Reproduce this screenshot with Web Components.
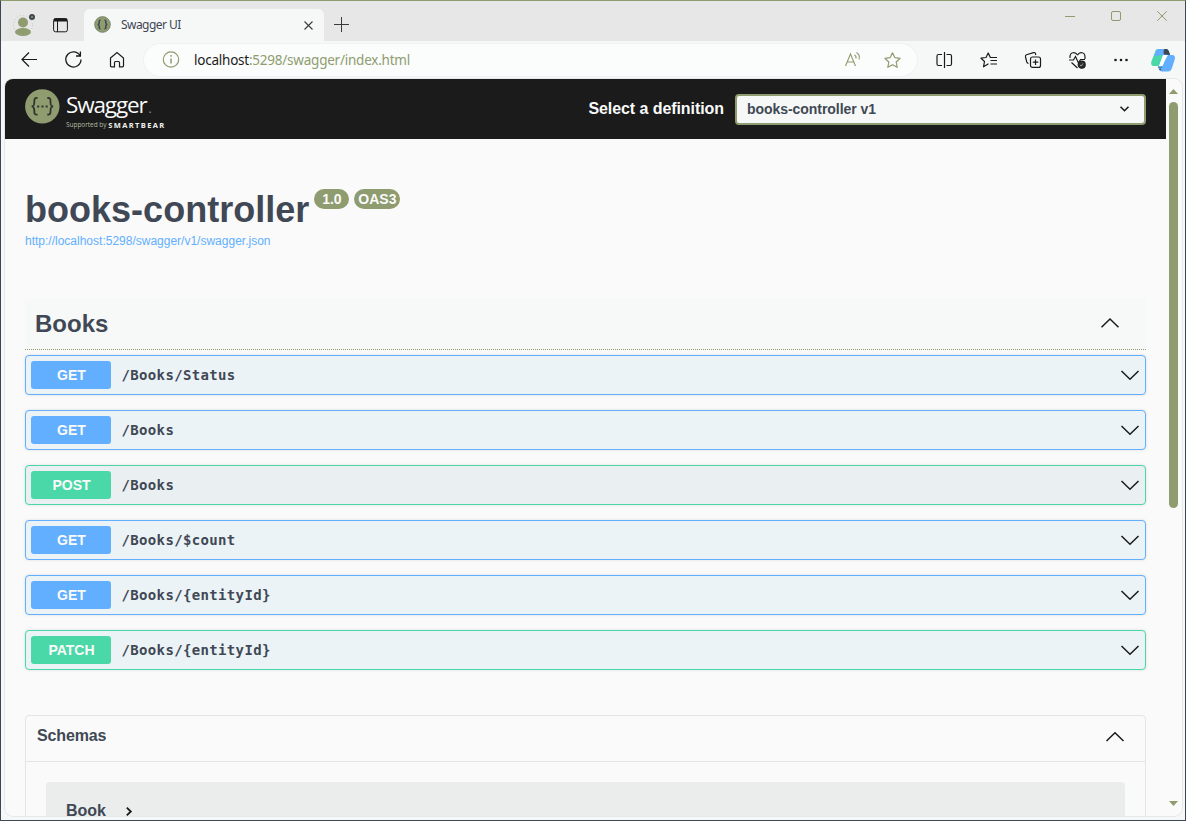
<!DOCTYPE html>
<html lang="en">
<head>
<meta charset="utf-8">
<title>Swagger UI</title>
<style>
html,body{margin:0;height:100%;overflow:hidden;background:#e7e7e7}
body{font-family:"Liberation Sans",Arial,sans-serif;color:#3f4854}
</style>
</head>
<body>
<browser-window>
  <tab-strip slot="tabs">Swagger UI</tab-strip>
  <tool-bar slot="tools"></tool-bar>
  <swagger-topbar><definition-select slot="select">books-controller v1</definition-select></swagger-topbar>
  <api-info version="1.0" oas="OAS3" url="http://localhost:5298/swagger/v1/swagger.json">books-controller</api-info>
  <tag-section name="Books">
    <op-row method="GET">/Books/Status</op-row>
    <op-row method="GET">/Books</op-row>
    <op-row method="POST">/Books</op-row>
    <op-row method="GET">/Books/$count</op-row>
    <op-row method="GET">/Books/{entityId}</op-row>
    <op-row method="PATCH">/Books/{entityId}</op-row>
  </tag-section>
  <schema-list><schema-item>Book</schema-item></schema-list>
  <scroll-track slot="scroll"></scroll-track>
</browser-window>
<script>
function define(name, render) {
  customElements.define(name, class extends HTMLElement {
    connectedCallback() {
      if (this.shadowRoot) return;
      this.attachShadow({mode: 'open'}).innerHTML =
        '<style>*{box-sizing:border-box}svg{display:block;flex:none;fill:none;overflow:visible}</style>' + render(this);
    }
  });
}

define('browser-window', () => `
<style>
:host{display:flex;flex-direction:column;box-sizing:border-box;width:1186px;height:821px;border:1px solid #3f4654;border-top-color:#8e9c6f;background:#f6f8f8}
.view{display:flex;flex:none;width:1177px;height:737px;margin:0 0 0 4px;background:#fafafa;border-radius:8px;overflow:hidden;box-shadow:0 0 0 1px #e4e8ea}
main{width:1161px;flex:none;overflow:hidden}
</style>
<slot name="tabs"></slot><slot name="tools"></slot>
<div class="view"><main><slot></slot></main><slot name="scroll"></slot></div>`);

define('tab-strip', () => `
<style>
:host{display:flex;flex:none;height:40px;background:#e7e7e7;font:12px "Noto Sans",sans-serif;color:#3f4654}
.left{display:flex;width:83px;padding:13px 0 0 12px;gap:18px}
.tab{display:flex;align-items:center;width:240px;height:32px;margin-top:8px;background:#f6f8f8;border-radius:6px 6px 0 0;padding:0 11px 1px 10px}
.tab span{flex:1;margin-left:10px;letter-spacing:-.55px}
.plus{margin:16px 0 0 10px}
.ctl{display:flex;gap:36px;margin:10px 18px 0 auto}
</style>
<div class="left">
<svg width="23" height="23" viewBox="0 0 23 23"><circle cx="10" cy="8.5" r="5" fill="#8e9c6f"/><ellipse cx="10" cy="18" rx="8" ry="4" fill="#8e9c6f"/><circle cx="10" cy="11" r="9.5" stroke="#a9b495" stroke-width=".6" stroke-dasharray="1 2.2"/><circle cx="19" cy="3" r="3" fill="#3f4654"/><circle cx="19" cy="3" r="1" fill="#8e9c6f"/></svg>
<svg width="15" height="15" viewBox="0 0 15 15" style="margin:4px 0 0 -1px" stroke="#1b1b1b"><rect x=".6" y=".6" width="13.8" height="13.2" rx="2"/><path d="M1 1.5h13M1 2.6h13" stroke-width="1.8"/><path d="M4.5 3v11"/></svg>
</div>
<div class="tab">
<svg width="17" height="17" viewBox="0 0 17 17"><circle cx="8.500" cy="8.500" r="7.900" fill="#8e9c6f" stroke="#5f6a55" stroke-width=".6"/><path d="M6.500 4.200C4.800 4.200 5.200 5.500 5.200 6.700 5.200 8 4.600 8.300 3.800 8.400c.8.2 1.400.6 1.400 1.900 0 1.100-.4 2.400 1.300 2.400M10.500 4.200c1.700 0 1.300 1.300 1.300 2.500 0 1.300.6 1.600 1.400 1.700-.8.2-1.400.6-1.400 1.900 0 1.100.4 2.400-1.300 2.400" stroke="#3f4654" stroke-width="1.500"/></svg>
<span><slot></slot></span>
<svg width="9" height="9" viewBox="0 0 9 9" stroke="#3a3d3a" stroke-width="1.100" style="margin-top:1px"><path d="M.5.5l8 8M8.500.5l-8 8"/></svg>
</div>
<svg class="plus" width="15" height="15" viewBox="0 0 15 15" stroke="#3a3a3a"><path d="M7.500 0v15M0 7.500h15"/></svg>
<div class="ctl">
<svg width="10" height="10" stroke="#8e9c6f"><path d="M0 5.500h10"/></svg>
<svg width="10" height="10" stroke="#8e9c6f"><rect x=".5" y=".5" width="9" height="9" rx="1.500"/></svg>
<svg width="10" height="10" stroke="#8e9c6f"><path d="M.2.2l9.600 9.600M9.800.2L.2 9.800"/></svg>
</div>`);

define('tool-bar', () => `
<style>
:host{display:flex;flex:none;box-sizing:border-box;align-items:flex-start;height:38px;background:#f6f8f8;padding-top:3px;font:14px "Noto Sans",sans-serif}
.nav{display:flex;width:143px;padding:7px 0 0 20px;gap:27px}
.addr{display:flex;align-items:center;width:773px;height:32px;border-radius:16px;background:#fbfcfc;padding:0 16px 1px 19px;box-shadow:0 0 0 1px #eef2f2}
.addr p{margin:0 auto 0 14px;color:#8e9c6f;white-space:nowrap;font-size:13.500px;letter-spacing:-.23px}
.addr b{font-weight:400;color:#1b1b1b}
.tools{display:flex;align-items:center;height:32px;margin-left:19px;gap:28px}
</style>
<div class="nav">
<svg width="17" height="17" viewBox="0 0 17 17" stroke="#1b1b1b" stroke-width="1.200"><path d="M16 8.500H1M8 1.500l-7 7 7 7"/></svg>
<svg width="17" height="17" viewBox="0 0 17 17" stroke="#1b1b1b" stroke-width="1.300"><path d="M15.200 5A7.600 7.600 0 1 0 16 8.500M15.400.5V5H11"/></svg>
<svg width="17" height="17" viewBox="0 0 17 17" stroke="#1b1b1b" stroke-width="1.200"><path d="M1.500 7L8 1.500 14.500 7V14.800q0 1-1 1H10.500V11.500q0-1-1-1h-3q-1 0-1 1v4.300H2.500q-1 0-1-1z"/></svg>
</div>
<div class="addr">
<svg width="17" height="17" viewBox="0 0 17 17" stroke="#8e9c6f" stroke-width="1.200"><circle cx="8" cy="8.500" r="7.700"/><path d="M8 7.500v5M8 4v1.700" stroke-width="1.500"/></svg>
<p><b>localhost</b>:5298/swagger/index.html</p>
<svg width="15" height="15" viewBox="0 0 15 15" stroke="#8e9c6f" stroke-width="1.100" style="margin-right:24px"><path d="M.5 14L5.500 2l5 12M2.200 10h6.600M9.500 3q2 1 1.500 3.500M11.500.5q4 2.500 2.500 7"/></svg>
<svg width="17" height="16" viewBox="0 0 17 16" stroke="#8e9c6f" stroke-width="1.200"><path d="M8.500.8l2.300 4.800 5.300.7-3.900 3.700 1 5.300-4.700-2.600-4.700 2.600 1-5.300L.9 6.300l5.300-.7z" stroke-linejoin="round"/></svg>
</div>
<div class="tools">
<svg width="16" height="16" viewBox="0 0 16 16" stroke="#1b1b1b" stroke-width="1.200"><path d="M6 2.500H2.500q-1.500 0-1.500 1.500v8q0 1.500 1.500 1.500H6M10.500 2.500H14q1.500 0 1.500 1.500v8q0 1.500-1.500 1.500h-3.500M8.500 0v16"/></svg>
<svg width="17" height="16" viewBox="0 0 17 16" stroke="#1b1b1b" stroke-width="1.200"><path d="M8.500 11.800L3.500 14.800l1-5.300L1 6.200l5-.7L8.200 1l2.200 4.500H17M10.500 8.500H17M10.500 12H17" stroke-linejoin="round"/></svg>
<svg width="16" height="16" viewBox="0 0 16 16" stroke="#1b1b1b" stroke-width="1.200"><rect x="5.500" y="5" width="10" height="10.400" rx="2"/><path d="M10.500 7.500v5.500M7.800 10.200h5.500M3.500 11.500Q2.200 11.200 1.800 10L.5 5q-.4-1.700 1-2.200L8.500.6q1.500-.4 2 1l.3 1.400"/></svg>
<svg width="17" height="17" viewBox="0 0 17 17" stroke="#1b1b1b" stroke-width="1.200"><path d="M8.500 3C6.500-.3 1-.3 1 5v1M8.500 3C10.500-.3 16 -.3 16 5v2M0 8h4.500l2-3.500L9.500 11l2-3.500H16M2.500 10.500L8.500 16"/><circle cx="12.700" cy="12.700" r="3.500" fill="#2c302c"/><path d="M11 13l1 1 2-2.500" stroke="#b7c0a5" stroke-width=".8"/></svg>
<svg width="15" height="4" viewBox="0 0 15 4"><path d="M.5 1h2v2h-2zM6 1h2v2H6zM11.500 1h2v2h-2z" fill="#1b1b1b" stroke="#1b1b1b" stroke-width=".3"/></svg>
<svg width="24" height="23" viewBox="0 0 24 23" style="margin-left:-6px"><path d="M5 1q1-1 3-1h7q2 0 3 3l1 3h-6L8 17H3Q-1 17 .5 12z" fill="#4ad8a8"/><path d="M5 1q1-1 3-1h7q2 0 3 3l1 3H9L7 7H3z" fill="#61affe"/><path d="M17 6h4q4 0 2.700 4.500L21 19q-1.200 3.500-4 3.500H11q-2.500 0-3.500-3.500l-.5-2h4z" fill="#61affe"/><path d="M12 6h3.500L12 16q-.5 1-2 1H8z" fill="#fff"/><path d="M13.500 0H16q2 1 3 6l-6-.5q-1-4 .5-5.500z" fill="#3f4654"/><path d="M7.500 18l3 4M10.500 18l-2 3" stroke="#3f4654" stroke-dasharray="1.500 1"/></svg>
</div>`);

define('swagger-topbar', () => `
<style>
:host{display:flex;box-sizing:border-box;height:60px;background:#1b1b1b;color:#fafafa;padding:0 20px}
.logo{margin:9px 0 0 0}
.word{display:flex;flex-direction:column;margin:10px 0 0 6px;font-family:"Open Sans",sans-serif;white-space:nowrap}
.name{font-size:22.500px;line-height:32px;height:31px;letter-spacing:-1.150px;width:92px}
.name i{font-style:normal;font-size:12px;color:#8e9c6f;margin-left:2px}
.by{display:flex;align-items:center;font-size:6.500px;line-height:10px;color:#b3bca2;gap:2px;letter-spacing:-.05px}
.by b{font-size:7.500px;color:#f0f2ec;letter-spacing:1.350px}
label{margin:0 11px 0 auto;font-weight:700;font-size:16px;line-height:59px;letter-spacing:-.07px}
</style>
<svg class="logo" width="35" height="35" viewBox="0 0 35 35"><circle cx="17.300" cy="18.400" r="17.200" fill="#8e9c6f"/><path d="M12.500 10c-3.500-.3-3.200 1.500-3.200 4.500s-.6 3.500-2.600 3.800c2 .2 2.600 1.200 2.600 4s-.3 4.500 3.200 4.200M22.300 10c3.500-.3 3.200 1.500 3.200 4.500s.6 3.500 2.600 3.800c-2 .2-2.600 1.200-2.600 4s.3 4.500-3.200 4.200" stroke="#30352f" stroke-width="1.800"/><path d="M12.200 17.500h2v2h-2zM16.500 17.500h2v2h-2zM20.700 17.500h2v2h-2z" fill="#30352f"/></svg>
<div class="word"><div class="name">Swagger<i>.</i></div><div class="by"><span>Supported by</span><b>SMARTBEAR</b></div></div>
<label>Select a definition</label>
<slot name="select"></slot>`);

define('definition-select', () => `
<style>
:host{display:flex;box-sizing:border-box;align-items:center;width:411px;height:31px;margin-top:15px;border:2px solid #8e9c6f;border-radius:4px;background:#f6f8f8;color:#3f4854;font-weight:700;font-size:14px;padding:0 15px 1px 10px;justify-content:space-between}
span{letter-spacing:-.05px}
</style><span><slot></slot></span>
<svg width="9" height="6" viewBox="0 0 9 6" stroke="#1b1b1b" stroke-width="1.600"><path d="M.5.7l4 4 4-4"/></svg>`);

define('api-info', el => `
<style>
:host{display:block;height:160px;padding:50px 20px 0;box-sizing:border-box}
.t{display:flex;align-items:flex-start}
h1{margin:0;font-size:36px;line-height:42px;letter-spacing:.02px}
.pill{height:20px;border-radius:10px;background:#8e9c6f;color:#fafafa;font-size:14px;line-height:20px;font-weight:700;text-align:center}
.v{width:35px;margin-left:5px}.o{width:46px;margin-left:5px}
a{display:block;font-size:12px;line-height:16px;color:#61affe;margin-top:2px}
</style>
<div class="t"><h1><slot></slot></h1><span class="pill v">${el.getAttribute('version')}</span><span class="pill o">${el.getAttribute('oas')}</span></div>
<a>${el.getAttribute('url')}</a>`);

define('tag-section', el => `
<style>
:host{display:block;padding:0 20px}
header{display:flex;align-items:center;justify-content:space-between;height:51px;background:#f7f8f8;border-bottom:1px dotted #8e9c6f;padding:0 27px 2px 10px}
h2{margin:1px 0 0;font-size:24px}
.rows{display:flex;flex-direction:column;gap:15px;padding-top:5px}
</style>
<header><h2>${el.getAttribute('name')}</h2><svg width="18" height="10" viewBox="0 0 18 10" stroke="#1b1b1b" stroke-width="1.500"><path d="M.5 9.200L9 1l8.500 8.200"/></svg></header>
<div class="rows"><slot></slot></div>`);

define('op-row', el => { const m = el.getAttribute('method'); const c = m === 'GET' ? '#61affe' : '#4ad8a8'; return `
<style>
:host{display:flex;box-sizing:border-box;align-items:center;width:1121px;height:40px;border:1px solid ${c};border-radius:4px;background:${m === 'POST' ? '#eaf0f1' : '#ebf3f7'};box-shadow:0 0 3px rgba(0,0,0,.13);padding:0 6px 0 5px}
.m{width:80px;height:28px;border-radius:3px;background:${c};color:#fafafa;font-weight:700;font-size:14px;line-height:28px;text-align:center;padding-left:1px}
.p{margin:0 auto 0 10.500px;font:700 14px "DejaVu Sans Mono",monospace;letter-spacing:.35px}
</style>
<span class="m">${m}</span><span class="p"><slot></slot></span>
<svg width="18" height="10" viewBox="0 0 18 10" stroke="#1b1b1b" stroke-width="1.500"><path d="M.5 1L9 9.200 17.500 1"/></svg>`; });

define('schema-list', () => `
<style>
:host{display:block;margin:45px 20px 0;box-sizing:border-box;height:140px;border:1px solid #e2e5e6;border-radius:4px}
header{display:flex;align-items:center;justify-content:space-between;height:46px;border-bottom:1px solid #e2e5e6;padding:0 21px 5px 11px}
h4{margin:0;font-size:16px;letter-spacing:-.15px}
header svg{margin-top:1px}
</style>
<header><h4>Schemas</h4><svg width="18" height="10" viewBox="0 0 18 10" stroke="#1b1b1b" stroke-width="1.500"><path d="M.5 9L9 .8 17.500 9"/></svg></header>
<slot></slot>`);

define('schema-item', () => `
<style>
:host{display:flex;box-sizing:border-box;align-items:center;margin:20px 20px 0;height:57px;border-radius:4px 4px 0 0;background:#ebecec;padding:0 20px;font-weight:700;font-size:16px;gap:20px}
</style><span><slot></slot></span><svg width="6" height="9" viewBox="0 0 6 9" stroke="#1b1b1b" stroke-width="1.800" style="margin-top:2px"><path d="M.8.7l4 3.800-4 3.800"/></svg>`);

define('scroll-track', () => `
<style>
:host{display:flex;flex-direction:column;align-items:center;width:15px;height:737px;padding:10px 0 10px;box-sizing:border-box}
.thumb{width:9px;height:406px;border-radius:5px;background:#8e9c6f;margin:8px 0 auto}
</style>
<svg width="9" height="5" viewBox="0 0 9 5"><path d="M4.500 0L9 5H0z" fill="#8e9c6f"/></svg>
<div class="thumb"></div>
<svg width="9" height="5" viewBox="0 0 9 5"><path d="M4.500 5L9 0H0z" fill="#8e9c6f"/></svg>`);
</script>
</body>
</html>
